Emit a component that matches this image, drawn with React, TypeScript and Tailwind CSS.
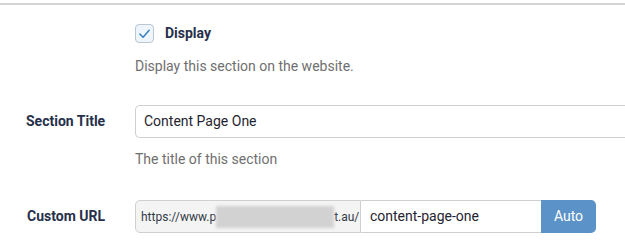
const App = () => {
  return (
    <div className="w-[625px] h-[248px] bg-white font-['Roboto',sans-serif] overflow-hidden">
      <div className="mt-[3px] border-t-2 border-[#d4d4d4]" />

      <div className="flex pt-[19px]">
        <div className="w-[135px] shrink-0" />
        <div className="flex flex-col">
          <label className="flex items-center h-[19px]">
            <span className="w-[19px] h-[19px] rounded-[4px] border border-[#bcc6d0] bg-[#eef5fc] flex items-center justify-center">
              <svg width="13" height="13" viewBox="0 0 14 14" fill="none">
                <path d="M2 7.5 L5.5 11 L12 3.5" stroke="#3a7fc1" strokeWidth="1.6" strokeLinecap="round" strokeLinejoin="round" />
              </svg>
            </span>
            <span className="ml-[11px] text-[14px] font-bold text-[#26304a]">Display</span>
          </label>
          <p className="mt-[13px] text-[14px] leading-[20px] text-[#6f6f6f]">Display this section on the website.</p>
        </div>
      </div>

      <div className="flex mt-[29px]">
        <div className="w-[135px] shrink-0 pl-[26px] flex items-center h-[33px]">
          <span className="text-[14px] font-bold text-[#26304a]">Section Title</span>
        </div>
        <div className="flex-1 flex flex-col">
          <div className="h-[33px] border border-[#cfcfcf] border-r-0 rounded-l-[5px] flex items-center pl-[8px]">
            <span className="text-[14px] text-[#1f2430]">Content Page One</span>
          </div>
          <p className="mt-[11px] text-[14px] leading-[20px] text-[#6f6f6f]">The title of this section</p>
        </div>
      </div>

      <div className="flex mt-[31px]">
        <div className="w-[135px] shrink-0 pl-[27px] flex items-center h-[33px]">
          <span className="text-[14px] font-bold text-[#26304a]">Custom URL</span>
        </div>
        <div className="flex h-[33px]">
          <div className="w-[226px] border border-[#cfcfcf] rounded-l-[5px] bg-[#f4f4f4] flex items-center pl-[5px] text-[12px] text-[#333a48] whitespace-nowrap">
            <span>https://www.p</span>
            <span className="inline-block w-[118px] h-[22px] bg-[#d2d2d2] blur-[1.5px]" />
            <span>t.au/</span>
          </div>
          <div className="w-[180px] border-y border-[#cfcfcf] flex items-center pl-[9px]">
            <span className="text-[14px] text-[#1f2430]">content-page-one</span>
          </div>
          <button className="w-[55px] rounded-r-[5px] bg-[#5b93c9] text-white text-[14px]">Auto</button>
        </div>
      </div>
    </div>
  );
};

export default App;
